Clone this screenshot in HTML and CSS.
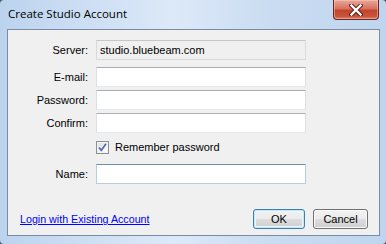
FILE: index.html
```html
<!DOCTYPE html>
<html lang="en">
<head>
<meta charset="UTF-8">
<title>Create Studio Account</title>
<link rel="stylesheet" href="styles.css">
</head>
<body>

<div class="window">
  <div class="titlebar">
    <span class="title">Create Studio Account</span>
    <button class="close" type="button">
      <svg width="14" height="12" viewBox="0 0 14 12">
        <path d="M2.5 1.5 L11.5 10.5 M11.5 1.5 L2.5 10.5" stroke="#5a1a12" stroke-width="4.2" stroke-linecap="square"/>
        <path d="M2.5 1.5 L11.5 10.5 M11.5 1.5 L2.5 10.5" stroke="#ffffff" stroke-width="2.4" stroke-linecap="square"/>
      </svg>
    </button>
  </div>

  <div class="client">
    <form class="fields">
      <label>Server:</label>
      <div class="box readonly">studio.bluebeam.com</div>

      <label>E-mail:</label>
      <input class="box" type="text">

      <label>Password:</label>
      <input class="box" type="password">

      <label>Confirm:</label>
      <input class="box" type="password">

      <span></span>
      <label class="remember">
        <span class="checkbox">
          <svg width="9" height="9" viewBox="0 0 9 9">
            <path d="M1 4.5 L3.3 7.3 L8 0.8" fill="none" stroke="#4a6fae" stroke-width="1.7"/>
          </svg>
        </span>
        Remember password
      </label>

      <label>Name:</label>
      <input class="box hover" type="text">
    </form>

    <div class="footer">
      <a href="#" class="link">Login with Existing Account</a>
      <div class="buttons">
        <button class="btn default" type="button">OK</button>
        <button class="btn" type="button">Cancel</button>
      </div>
    </div>
  </div>
</div>

</body>
</html>
```

FILE: styles.css
```css
html, body {
  margin: 0;
  background: #4a5260;
}
body {
  width: 386px;
  height: 244px;
  font-family: "Liberation Sans", Arial, sans-serif;
  font-size: 11px;
  color: #000;
}
.window {
  width: 386px;
  height: 244px;
  box-sizing: border-box;
  padding: 0 6px 8px 7px;
  display: flex;
  flex-direction: column;
  border-radius: 4px;
  background: linear-gradient(to right, #bcd3ee 0%, #cfe0f4 25%, #dce9f8 45%, #cadcf1 70%, #bfd5ef 100%);
}
.titlebar {
  height: 29px;
  display: flex;
  align-items: flex-start;
  justify-content: space-between;
}
.title {
  font-family: "Open Sans", "Noto Sans", sans-serif;
  font-size: 11.5px;
  padding: 6px 0 0 1px;
  color: #000;
}
.close {
  width: 46px;
  height: 20px;
  margin-right: 1px;
  padding: 0;
  border: 1px solid #6a261a;
  border-top: none;
  border-radius: 0 0 4px 4px;
  background: linear-gradient(to bottom, #e8a99b 0%, #d7725e 45%, #c4442d 55%, #c8523a 85%, #d9826e 100%);
  box-shadow: inset 0 0 0 1px rgba(255, 210, 200, 0.45);
  display: flex;
  align-items: center;
  justify-content: center;
}
.client {
  flex: 1;
  border: 1px solid #7b8ca2;
  background: #f0f0f0;
  display: flex;
  flex-direction: column;
}
.fields {
  margin: 0;
  padding: 10px 0 0 0;
  display: grid;
  grid-template-columns: 80px 210px;
  grid-template-rows: 24px 20px 20px 20px 25px 20px;
  column-gap: 8px;
  row-gap: 3px;
}
.fields > label {
  text-align: right;
  line-height: 20px;
  height: 20px;
}
.box {
  box-sizing: border-box;
  width: 210px;
  height: 20px;
  margin: 0;
  padding: 0 3px;
  font: inherit;
  line-height: 18px;
  background: #fff;
  border: 1px solid #dbdfe6;
  border-top-color: #abadb3;
  border-bottom-color: #e3e9ef;
  outline: none;
}
.box.readonly {
  background: #f0f0f0;
  border-color: #d9d9d9;
  border-top-color: #c6c6c6;
  color: #000;
}
.box.hover {
  border-color: #b7cde2;
  border-top-color: #6f8fae;
}
.remember {
  display: flex;
  align-items: center;
  gap: 6px;
  height: 20px;
  margin-top: 1px;
  text-align: left;
}
.checkbox {
  box-sizing: border-box;
  width: 13px;
  height: 13px;
  border: 1px solid #8e8f8f;
  background: linear-gradient(135deg, #dcdcdc 0%, #f4f4f4 60%, #ffffff 100%);
  box-shadow: inset 0 0 0 1px #f4f4f4;
  display: flex;
  align-items: center;
  justify-content: center;
}
.footer {
  margin-top: auto;
  padding: 0 11px 6px 12px;
  display: flex;
  align-items: center;
  justify-content: space-between;
}
.link {
  color: #0000ff;
  text-decoration: underline;
  font-size: 10.7px;
}
.buttons {
  display: flex;
  gap: 8px;
}
.btn {
  height: 20px;
  width: 55px;
  padding: 0;
  font: inherit;
  color: #000;
  border: 1px solid #707070;
  border-radius: 3px;
  background: linear-gradient(to bottom, #f2f2f2 0%, #ebebeb 50%, #dddddd 51%, #cfcfcf 100%);
  box-shadow: inset 0 0 0 1px #fafafa;
}
.btn.default {
  width: 52px;
  border-color: #3c7fb1;
  box-shadow: inset 0 0 0 1px #c4e6f6, inset 0 0 0 2px #eaf6fc;
}
```
